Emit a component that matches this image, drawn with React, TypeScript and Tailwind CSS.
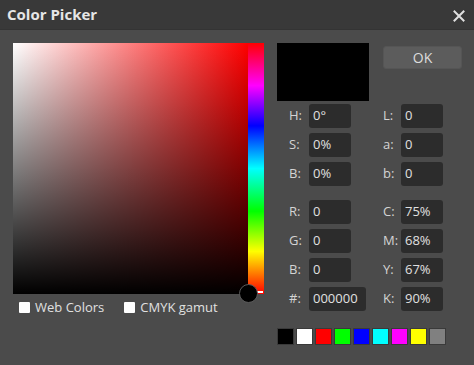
import React from "react";

const swatches = ["#000000", "#ffffff", "#ff0000", "#00ff00", "#0000ff", "#00ffff", "#ff00ff", "#ffff00", "#808080"];

function Row({ a, b }: { a: [string, string, boolean?]; b: [string, string] }) {
  return (
    <div className="flex items-center h-6">
      <div className="w-[32px] pl-[12px] text-[13px] text-[#d4d4d4]">{a[0]}</div>
      <div
        className={`h-6 ${a[2] ? "w-[57px] mr-[17px]" : "w-[42px] mr-[32px]"} rounded-[3px] bg-[#2c2c2c] flex items-center pl-[4px] text-[13px] text-[#e0e0e0]`}
      >
        {a[1]}
      </div>
      <div className="w-[18px] text-[13px] text-[#d4d4d4]">{b[0]}</div>
      <div className="h-6 w-[42px] rounded-[3px] bg-[#2c2c2c] flex items-center pl-[4px] text-[13px] text-[#e0e0e0]">
        {b[1]}
      </div>
    </div>
  );
}

export default function App() {
  return (
    <div className="w-[474px] h-[365px] bg-[#4b4b4b] font-['Open_Sans',sans-serif] overflow-hidden">
      <div className="h-[30px] bg-[#393939] border-b border-[#343434] flex items-center justify-between pl-[7px] pr-[9px]">
        <div className="text-[15px] font-bold text-[#e6e6e6]">Color Picker</div>
        <svg width="12" height="12" viewBox="0 0 12 12" className="mt-[2px]">
          <path d="M1.5 1.5 L10.5 10.5 M10.5 1.5 L1.5 10.5" stroke="#e0e0e0" strokeWidth="2" strokeLinecap="square" />
        </svg>
      </div>
      <div className="flex pl-[13px] pt-[13px]">
        <div>
          <div className="flex relative">
            <div className="w-[235px] h-[251px] bg-[linear-gradient(to_right,#ffffff,#ff0000)]">
              <div className="w-full h-full bg-[linear-gradient(to_bottom,rgba(0,0,0,0),#000000)]" />
            </div>
            <div className="w-4 h-[251px] relative bg-[linear-gradient(to_bottom,#ff0000,#ff00ff_17%,#0000ff_33%,#00ffff_50%,#00ff00_67%,#ffff00_83%,#ff0000)]">
              <div className="absolute right-[1px] bottom-[1px] w-[7px] h-[2px] bg-white" />
            </div>
            <div className="absolute left-[226px] top-[241px] w-[19px] h-[19px] rounded-full bg-black border border-[#5a5a5a] z-10" />
          </div>
          <div className="flex items-center mt-[4px] text-[13px] text-[#e0e0e0]">
            <div className="ml-[6px] w-[11px] h-[11px] bg-white rounded-[1px]" />
            <span className="ml-[5px]">Web Colors</span>
            <div className="ml-[20px] w-[11px] h-[11px] bg-white rounded-[1px]" />
            <span className="ml-[5px]">CMYK gamut</span>
          </div>
        </div>
        <div className="ml-[13px]">
          <div className="flex">
            <div className="w-[92px] h-[58px] bg-black" />
            <div className="ml-[14px] mt-[3px] w-[79px] h-[23px] rounded-[3px] bg-[#5c5c5c] border border-[#555] flex items-center justify-center text-[14px] text-[#dcdcdc]">
              OK
            </div>
          </div>
          <div className="mt-[3px] flex flex-col gap-[5px]">
            <Row a={["H:", "0°"]} b={["L:", "0"]} />
            <Row a={["S:", "0%"]} b={["a:", "0"]} />
            <Row a={["B:", "0%"]} b={["b:", "0"]} />
          </div>
          <div className="mt-[14px] flex flex-col gap-[5px]">
            <Row a={["R:", "0"]} b={["C:", "75%"]} />
            <Row a={["G:", "0"]} b={["M:", "68%"]} />
            <Row a={["B:", "0"]} b={["Y:", "67%"]} />
            <Row a={["#:", "000000", true]} b={["K:", "90%"]} />
          </div>
          <div className="mt-[17px] flex gap-[2px]">
            {swatches.map((c) => (
              <div key={c} className="w-[17px] h-[17px] border border-[#3a3a3a]" style={{ backgroundColor: c }} />
            ))}
          </div>
        </div>
      </div>
    </div>
  );
}
